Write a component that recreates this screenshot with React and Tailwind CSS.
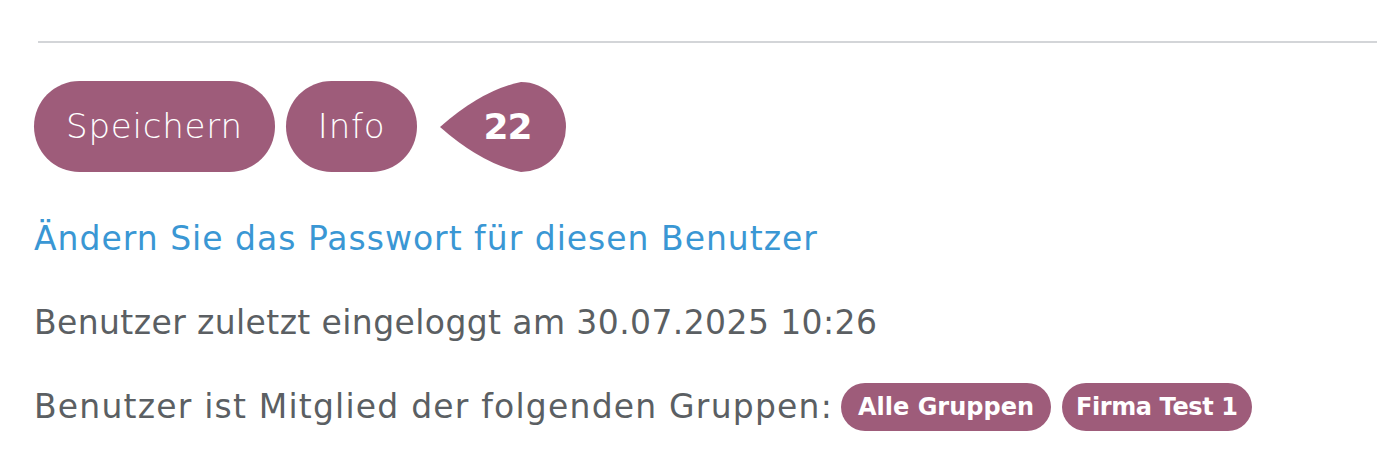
export default function App() {
  const font = { fontFamily: '"DejaVu Sans", sans-serif' };
  return (
    <div className="w-[1377px] h-[465px] bg-white overflow-hidden" style={font}>
      <div className="pt-[41px] pl-[38px]">
        <div className="h-[2px] bg-[#d3d5d8]" />
      </div>

      <div className="flex items-center pl-[34px] mt-[38px] h-[91px]">
        <button className="h-[91px] px-[32px] rounded-full bg-[#9e5c7a] text-white text-[34px] font-light tracking-[0.8px]">
          Speichern
        </button>
        <button className="ml-[11px] h-[91px] px-[32px] rounded-full bg-[#9e5c7a] text-white text-[34px] font-light tracking-[0.8px]">
          Info
        </button>
        <div className="relative ml-[23px] w-[126px] h-[90px]">
          <svg width="126" height="90" viewBox="0 0 126 90" className="absolute inset-0">
            <path
              d="M0 45 Q 42 8 81 0 A 45 45 0 1 1 81 90 Q 42 82 0 45 Z"
              fill="#9e5c7a"
            />
          </svg>
          <span className="absolute left-[43px] top-0 h-[90px] flex items-center text-white text-[36px] font-bold tracking-[-1px]">
            22
          </span>
        </div>
      </div>

      <div className="pl-[34px] mt-[47px] flex flex-col gap-[44px]">
        <a className="text-[#3a97d4] text-[33px] leading-[40px] tracking-[1px]">
          Ändern Sie das Passwort für diesen Benutzer
        </a>
        <p className="text-[#5b5f63] text-[33px] leading-[40px] tracking-[0.4px]">
          Benutzer zuletzt eingeloggt am 30.07.2025 10:26
        </p>
        <div className="flex items-center h-[40px] text-[#5b5f63] text-[33px] leading-[40px]">
          <span className="tracking-[1.2px]">Benutzer ist Mitglied der folgenden Gruppen:</span>
          <span className="ml-[8px] h-[48px] px-[17px] shrink-0 rounded-full bg-[#9e5c7a] text-white text-[24px] font-bold flex items-center">
            Alle Gruppen
          </span>
          <span className="ml-[11px] h-[48px] px-[14px] shrink-0 rounded-full bg-[#9e5c7a] text-white text-[24px] font-bold tracking-[-0.4px] flex items-center">
            Firma Test 1
          </span>
        </div>
      </div>
    </div>
  );
}
